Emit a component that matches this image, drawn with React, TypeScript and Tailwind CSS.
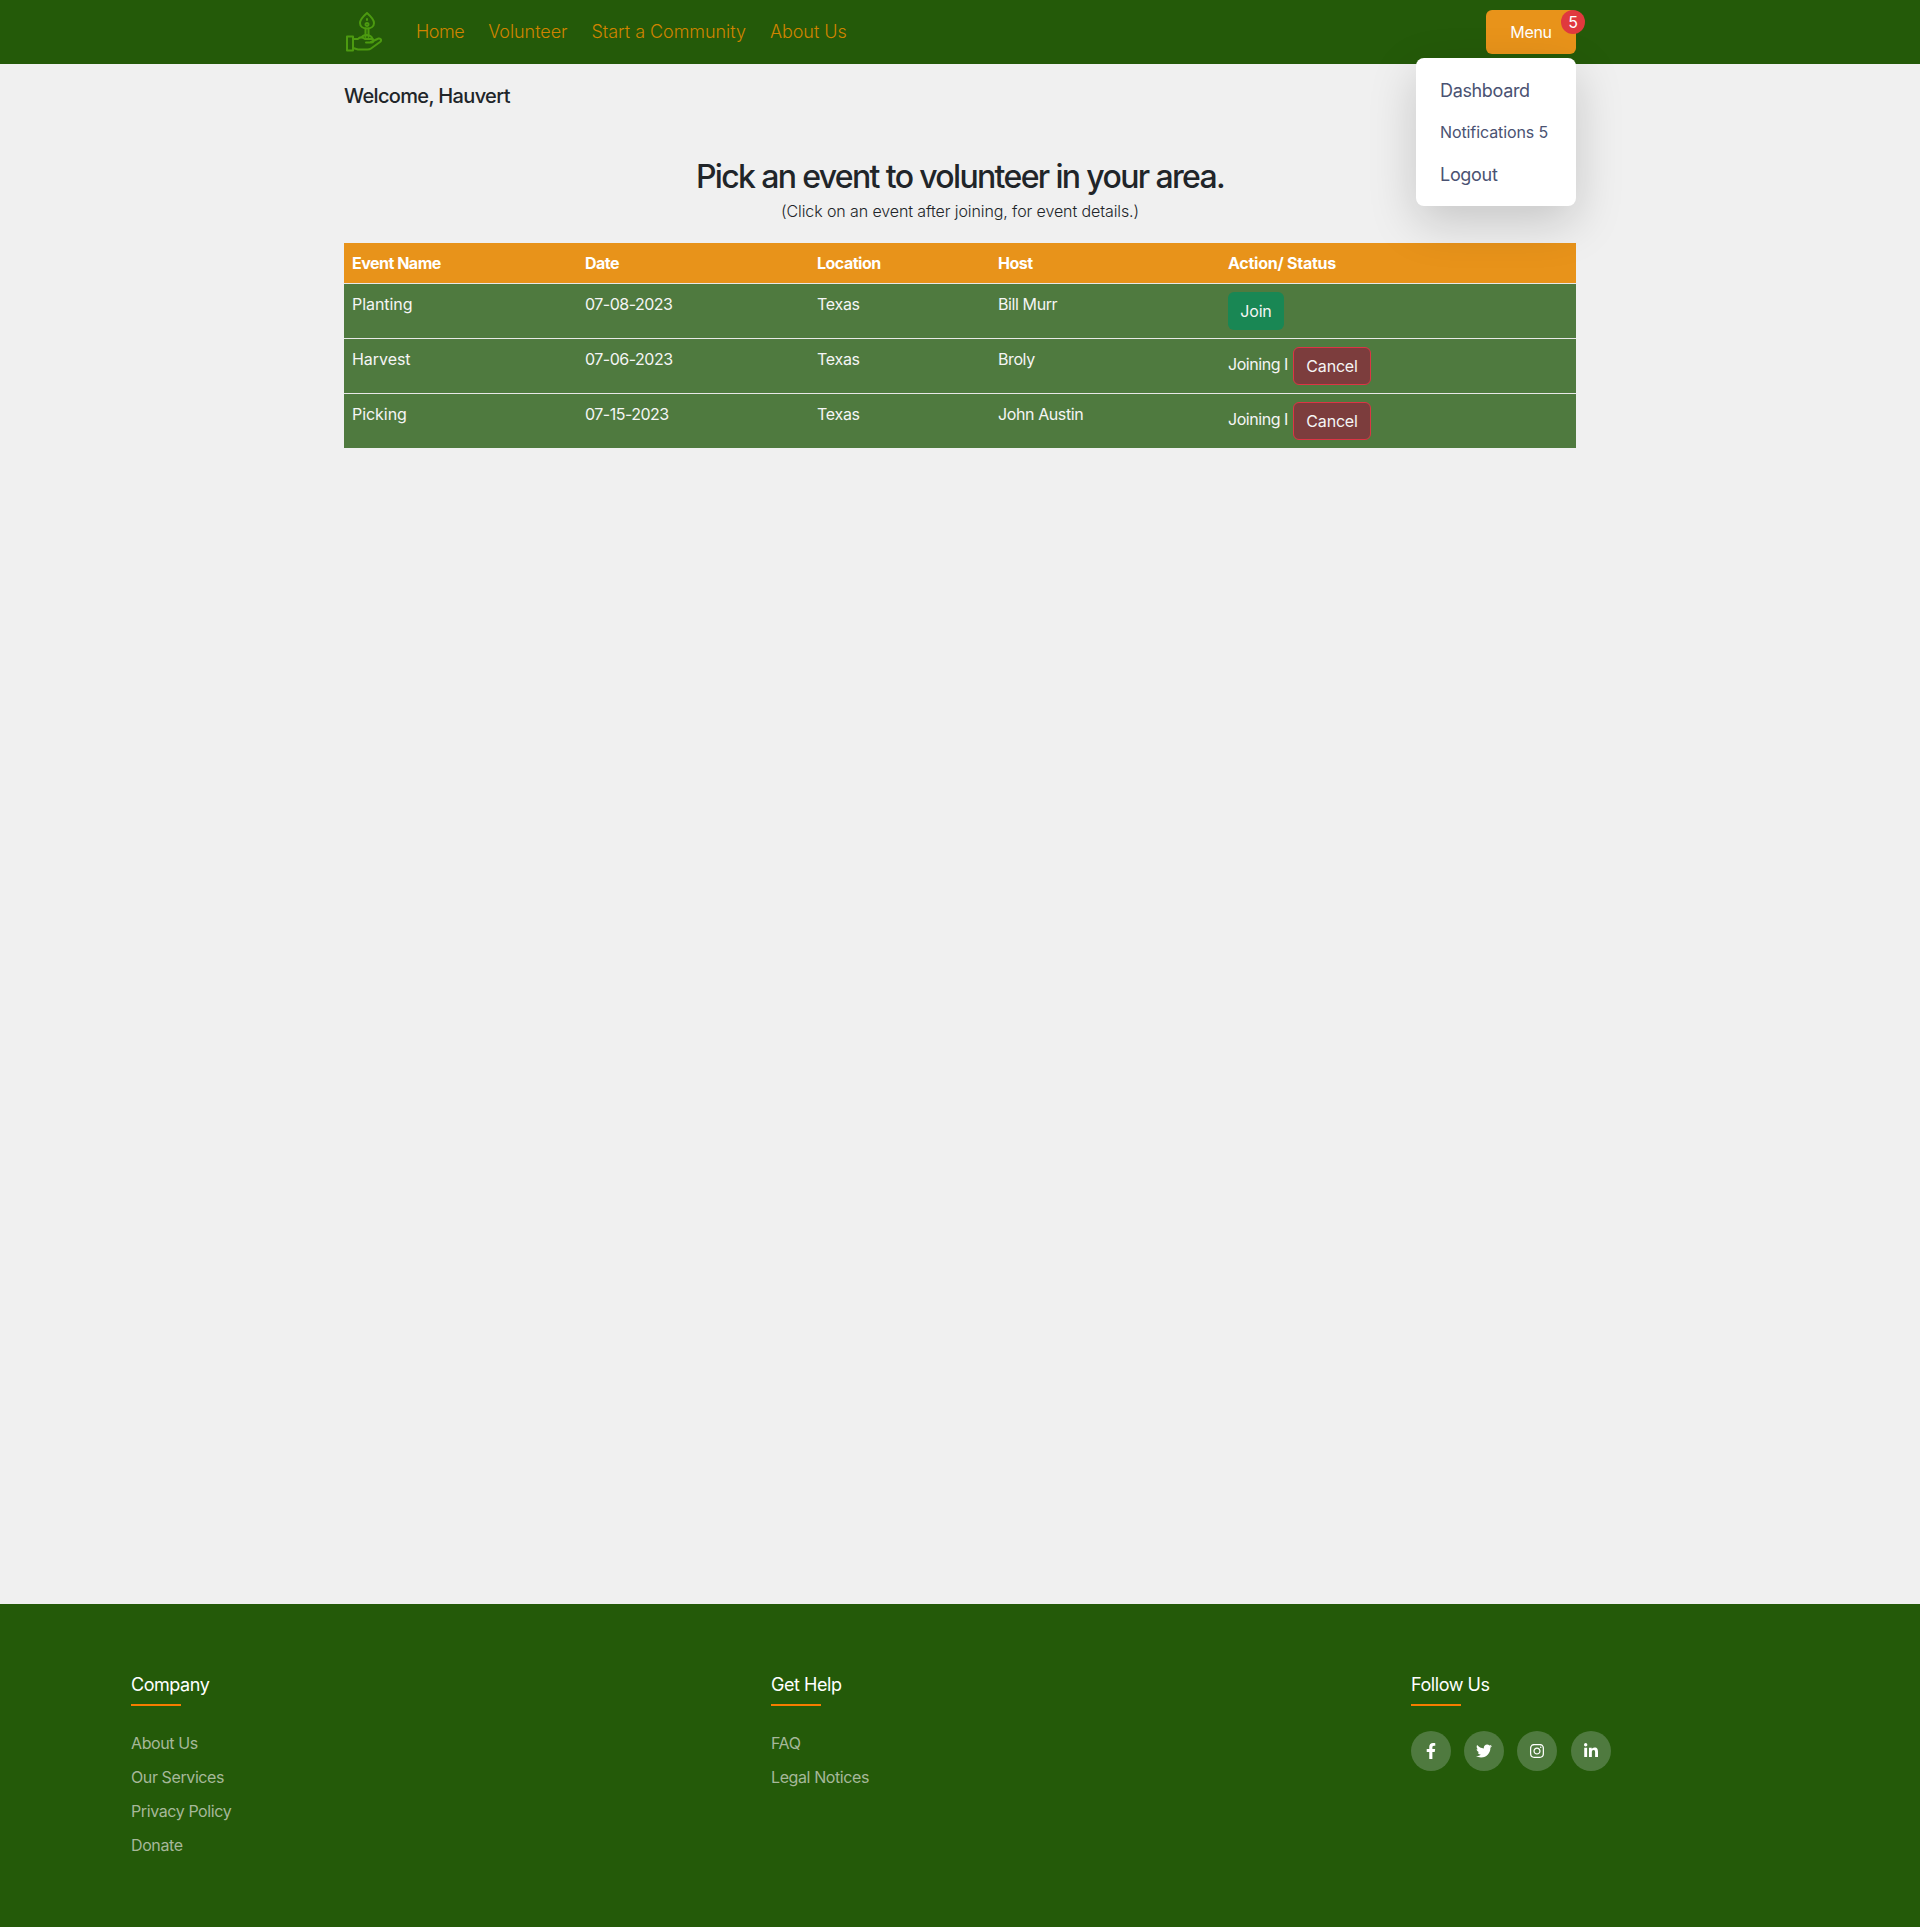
import React from "react";
import { FaFacebookF, FaTwitter, FaInstagram, FaLinkedinIn } from "react-icons/fa";

const rows = [
  { name: "Planting", date: "07-08-2023", loc: "Texas", host: "Bill Murr", joined: false },
  { name: "Harvest", date: "07-06-2023", loc: "Texas", host: "Broly", joined: true },
  { name: "Picking", date: "07-15-2023", loc: "Texas", host: "John Austin", joined: true },
];

function Logo() {
  return (
    <svg width="36" height="40" viewBox="0 0 36 40" fill="none" stroke="#4c9a10" strokeWidth="2" strokeLinejoin="round" strokeLinecap="round" className="block">
      <path d="M21 1 C17 4.5 14 7.5 14 11 C14 14.5 17 16.5 21 16.5 C25 16.5 28 14.5 28 11 C28 7.5 25 4.5 21 1 Z" />
      <path d="M19.5 16.5 V25 M22.5 16.5 V25" />
      <path d="M21 7 V8 M21 11 A1.5 1.5 0 1 0 21 14 A1.5 1.5 0 1 0 21 11" />
      <rect x="1" y="24.5" width="6" height="14" />
      <path d="M7 27 H12 C14 24.5 17 25.5 19 27 H26 C28 27 28 30 26 30.5 H20" />
      <path d="M25 30 L32.5 26.5 C35 26 36 28.5 34 30 L25 36.5 C24 37.3 23 37.5 21.5 37.5 H12 L7 36" />
      <path d="M16 25 C17.5 22 25 22 26.5 27" />
    </svg>
  );
}

function Cancel() {
  return (
    <button className="h-[38px] w-[78px] rounded-md border border-[#dc3545] bg-[#7c3d3d] text-center text-base text-[#f5f5f5] tracking-[-0.2px]">
      Cancel
    </button>
  );
}

function FooterCol({ title, links, children }: { title: string; links?: string[]; children?: React.ReactNode }) {
  return (
    <div className="pl-[131px]">
      <h4 className="text-lg leading-[22px] text-white tracking-[-0.45px]">{title}</h4>
      <div className="mt-[8px] h-[2px] w-[50px] bg-[#f57c00]" />
      {links && (
        <ul className="mt-[25px] flex flex-col gap-[10px]">
          {links.map((l) => (
            <li key={l} className="text-base leading-6 text-[#a6b89a] tracking-[-0.4px]">
              {l}
            </li>
          ))}
        </ul>
      )}
      {children}
    </div>
  );
}

export default function App() {
  return (
    <div className="flex min-h-screen flex-col bg-[#f0f0f0] text-[#212529] font-['Inter','Liberation_Sans',sans-serif]">
      <nav className="relative z-10 h-16 bg-[#245a09]">
        <div className="relative mx-auto flex h-16 w-[1232px] items-center">
          <div className="ml-[2px]">
            <Logo />
          </div>
          <ul className="ml-[34px] flex gap-6 text-lg text-[#d08400] tracking-[-0.05px] font-light">
            <li className="tracking-[-0.5px]">Home</li>
            <li>Volunteer</li>
            <li>Start a Community</li>
            <li>About Us</li>
          </ul>
          <div className="ml-auto">
            <button className="relative mt-[-1px] h-[44px] w-[90px] rounded-md bg-[#e8931a] text-base text-white tracking-[-0.3px]">
              Menu
              <span className="absolute left-[75px] top-0 flex h-6 w-6 items-center justify-center rounded-full bg-[#e0393e] text-base text-white">
                5
              </span>
            </button>
          </div>
          <div className="absolute right-0 top-[58px] flex h-[148px] w-[160px] flex-col rounded-lg bg-white pl-[24px] pt-[21px] text-[#4a5272] shadow-[0_16px_48px_rgba(0,0,0,0.175)]">
            <div className="h-[24px] text-lg leading-6 tracking-[-0.35px]">Dashboard</div>
            <div className="mt-[17px] h-[24px] text-base leading-6 tracking-[-0.1px]">Notifications 5</div>
            <div className="mt-[19px] h-[24px] text-lg leading-6 tracking-[-0.3px]">Logout</div>
          </div>
        </div>
      </nav>

      <main className="mx-auto w-[1232px] flex-1">
        <h5 className="mt-[20px] text-xl font-medium leading-6 tracking-[-0.65px] text-[#212529]">Welcome, Hauvert</h5>
        <h2 className="mt-[50px] text-center text-[32px] font-medium leading-[38px] tracking-[-1.65px] text-[#212529]">
          Pick an event to volunteer in your area.
        </h2>
        <p className="mt-[3px] text-center text-base font-light leading-6 tracking-[-0.1px] text-[#212529]">
          (Click on an event after joining, for event details.)
        </p>
        <table className="mt-[20px] w-[1232px] table-fixed border-collapse text-base text-[#f5f5f5]">
          <colgroup>
            <col className="w-[233px]" />
            <col className="w-[232px]" />
            <col className="w-[181px]" />
            <col className="w-[230px]" />
            <col className="w-[356px]" />
          </colgroup>
          <thead>
            <tr className="h-[40px] bg-[#e8931a] text-white">
              {["Event Name", "Date", "Location", "Host"].map((h) => (
                <th key={h} className="px-2 text-left font-bold tracking-[-0.5px] border-b border-[#e8e8e8]">
                  {h}
                </th>
              ))}
              <th className="px-2 text-left font-bold tracking-[-0.25px] border-b border-[#e8e8e8]">Action/ Status</th>
            </tr>
          </thead>
          <tbody>
            {rows.map((r, i) => (
              <tr key={r.name} className={`h-[55px] bg-[#4f7a3f] ${i < 2 ? "border-b border-[#e8e8e8]" : ""}`}>
                <td className="px-2 pt-[8px] align-top leading-6 tracking-[-0.05px]">{r.name}</td>
                <td className="px-2 pt-[8px] align-top leading-6 tracking-[-0.5px]">{r.date}</td>
                <td className="px-2 pt-[8px] align-top leading-6 tracking-[-0.3px]">{r.loc}</td>
                <td className="px-2 pt-[8px] align-top leading-6 tracking-[-0.4px]">{r.host}</td>
                <td className="px-2 align-top">
                  {r.joined ? (
                    <div className="flex items-center pt-[8px] leading-6 tracking-[-0.45px]">
                      <span className="mt-[-3px] w-[65px]">Joining I</span>
                      <Cancel />
                    </div>
                  ) : (
                    <div className="pt-[8px]">
                      <button className="h-[38px] w-[56px] rounded-md bg-[#198754] text-base text-[#f5f5f5] tracking-[-0.2px]">
                        Join
                      </button>
                    </div>
                  )}
                </td>
              </tr>
            ))}
          </tbody>
        </table>
      </main>

      <footer className="grid h-[323px] grid-cols-3 bg-[#245a09] pt-[70px]">
        <FooterCol title="Company" links={["About Us", "Our Services", "Privacy Policy", "Donate"]} />
        <FooterCol title="Get Help" links={["FAQ", "Legal Notices"]} />
        <FooterCol title="Follow Us">
          <div className="mt-[25px] flex gap-[13px]">
            {[FaFacebookF, FaTwitter, FaInstagram].map((Icon, i) => (
              <span key={i} className="flex h-10 w-10 items-center justify-center rounded-full bg-[#4f7a3f] text-base text-white">
                <Icon />
              </span>
            ))}
            <span className="ml-px flex h-10 w-10 items-center justify-center rounded-full bg-[#4f7a3f] text-base text-white">
              <FaLinkedinIn />
            </span>
          </div>
        </FooterCol>
      </footer>
    </div>
  );
}
